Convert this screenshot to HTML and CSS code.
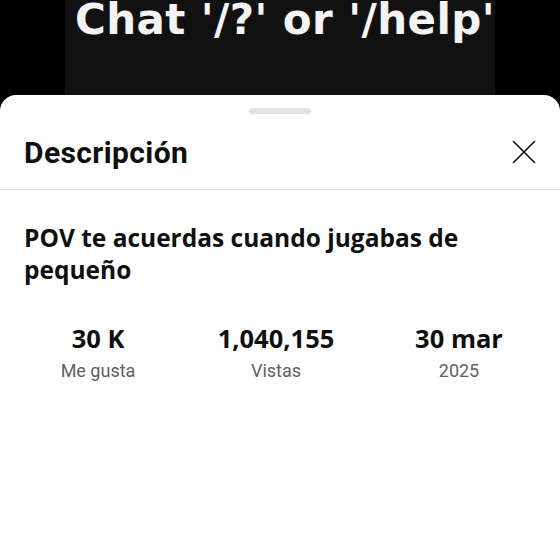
FILE: index.html
```html
<!DOCTYPE html>
<html lang="es">
<head>
<meta charset="utf-8">
<title>Descripción</title>
<link rel="stylesheet" href="styles.css">
</head>
<body>
<div class="video">
  <div class="frame">
    <div class="caption">Chat '/?' or '/help'</div>
  </div>
</div>
<div class="sheet">
  <div class="handle"></div>
  <div class="header">
    <h1 class="heading">Descripción</h1>
    <svg class="close" width="24" height="24" viewBox="0 0 24 24" aria-label="Cerrar">
      <path d="M1 1 L23 23 M23 1 L1 23" stroke="#0f0f0f" stroke-width="1.6" fill="none"/>
    </svg>
  </div>
  <h2 class="title">POV te acuerdas cuando jugabas de pequeño</h2>
  <div class="stats">
    <div class="stat">
      <div class="value">30 K</div>
      <div class="label">Me gusta</div>
    </div>
    <div class="stat">
      <div class="value">1,040,155</div>
      <div class="label">Vistas</div>
    </div>
    <div class="stat">
      <div class="value">30 mar</div>
      <div class="label">2025</div>
    </div>
  </div>
</div>
</body>
</html>
```
FILE: styles.css
```css
html, body {
  margin: 0;
  padding: 0;
  height: 100%;
}
body {
  background: #000;
  display: flex;
  flex-direction: column;
  overflow: hidden;
}
.video {
  height: 95px;
  flex: none;
  display: flex;
  padding-left: 65px;
}
.frame {
  width: 430px;
  height: 95px;
  background: #111111;
  overflow: hidden;
  padding-left: 10px;
  box-sizing: border-box;
}
.caption {
  font-family: "DejaVu Sans", sans-serif;
  font-weight: bold;
  font-size: 42px;
  line-height: 42px;
  color: #f4f4f4;
  white-space: nowrap;
  margin-top: -1px;
  letter-spacing: 0.4px;
}
.sheet {
  flex: 1;
  background: #fff;
  border-radius: 16px 16px 0 0;
  display: flex;
  flex-direction: column;
}
.handle {
  width: 62px;
  height: 6px;
  border-radius: 3px;
  background: #e3e3e3;
  margin: 13px auto 0;
}
.header {
  height: 75px;
  display: flex;
  align-items: center;
  justify-content: space-between;
  padding: 0 24px;
  border-bottom: 1px solid #e5e5e5;
}
.heading {
  margin: 0;
  font-family: Roboto, sans-serif;
  font-weight: bold;
  font-size: 30px;
  letter-spacing: 0.4px;
  color: #0f0f0f;
  padding-top: 1px;
}
.close {
  display: block;
}
.title {
  margin: 0;
  padding: 32px 24px 0;
  font-family: "Open Sans", sans-serif;
  font-weight: bold;
  font-size: 24.5px;
  line-height: 32px;
  color: #0f0f0f;
}
.stats {
  display: grid;
  grid-template-columns: 178px 178px 1fr;
  padding: 0 7px 0 9px;
  margin-top: 37px;
}
.stat {
  display: flex;
  flex-direction: column;
  align-items: center;
}
.value {
  font-family: "Open Sans", sans-serif;
  font-weight: bold;
  font-size: 25.5px;
  line-height: 30px;
  color: #0f0f0f;
}
.label {
  font-family: Roboto, sans-serif;
  font-size: 18px;
  color: #606060;
  margin-top: 7px;
}
```
